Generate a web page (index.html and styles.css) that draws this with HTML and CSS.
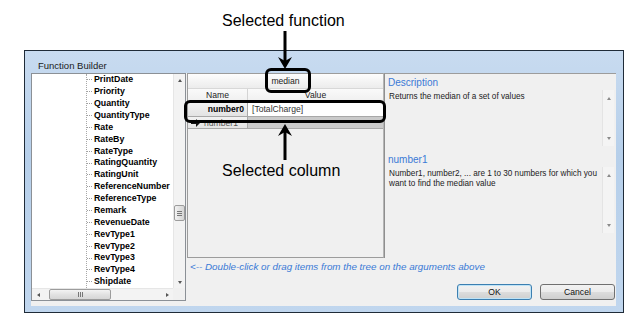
FILE: index.html
```html
<!DOCTYPE html>
<html lang="en">
<head>
    <meta charset="UTF-8">
    <title>Function Builder</title>
    <link rel="stylesheet" href="styles.css">
</head>
<body>
    <div class="stage">
        <div class="window">
            <div class="titlebar">Function Builder</div>
            <div class="client">
                <!-- field tree -->
                <div class="tree">
                    <ul class="tree-list">
                        <li>PrintDate</li>
                        <li>Priority</li>
                        <li>Quantity</li>
                        <li>QuantityType</li>
                        <li>Rate</li>
                        <li>RateBy</li>
                        <li>RateType</li>
                        <li>RatingQuantity</li>
                        <li>RatingUnit</li>
                        <li>ReferenceNumber</li>
                        <li>ReferenceType</li>
                        <li>Remark</li>
                        <li>RevenueDate</li>
                        <li>RevType1</li>
                        <li>RevType2</li>
                        <li>RevType3</li>
                        <li>RevType4</li>
                        <li>Shipdate</li>
                    </ul>
                    <div class="vscroll">
                        <div class="sb-btn"><i class="tri up"></i></div>
                        <div class="sb-track"><div class="thumb v"><b></b><b></b><b></b></div></div>
                        <div class="sb-btn"><i class="tri down"></i></div>
                    </div>
                    <div class="hscroll">
                        <div class="sb-btn"><i class="tri left"></i></div>
                        <div class="sb-track"><div class="thumb h"><b></b><b></b><b></b></div></div>
                        <div class="sb-btn"><i class="tri right"></i></div>
                    </div>
                    <div class="corner"></div>
                </div>

                <!-- arguments grid -->
                <div class="args">
                    <div class="fn-name">median</div>
                    <div class="arg-head">
                        <span class="c-name">Name</span>
                        <span class="c-value">Value</span>
                    </div>
                    <div class="arg-row">
                        <span class="c-name strong">number0</span>
                        <span class="c-value filled">[TotalCharge]</span>
                    </div>
                    <div class="arg-row">
                        <span class="c-name new">
                            <svg width="9" height="8" viewBox="0 0 9 8"><path d="M0 3h5V0l4 4-4 4V5H0z" fill="#111"/></svg>
                            number1
                        </span>
                        <span class="c-value empty"></span>
                    </div>
                </div>

                <!-- help text -->
                <div class="info">
                    <div class="info-title">Description</div>
                    <div class="info-box desc">
                        <p>Returns the median of a set of values</p>
                        <div class="mini-scroll"><i class="tri up"></i><i class="tri down"></i></div>
                    </div>
                    <div class="info-title">number1</div>
                    <div class="info-box arg">
                        <p>Number1, number2, ... are 1 to 30 numbers for which you want to find the median value</p>
                        <div class="mini-scroll"><i class="tri up"></i><i class="tri down"></i></div>
                    </div>
                </div>

                <div class="footer">
                    <div class="hint">&lt;-- Double-click or drag items from the tree on the arguments above</div>
                    <div class="buttons">
                        <button class="btn default">OK</button>
                        <button class="btn">Cancel</button>
                    </div>
                </div>
            </div>
        </div>

        <!-- annotations drawn over the screenshot -->
        <div class="callout callout-fn">Selected function</div>
        <svg class="arrow arrow-down" width="16" height="38" viewBox="0 0 16 38">
            <rect x="6.5" y="0" width="3" height="30" fill="#000"/>
            <path d="M8 38L1 26l7 4 7-4z" fill="#000"/>
        </svg>
        <div class="ring ring-fn"></div>
        <div class="ring ring-row"></div>
        <svg class="arrow arrow-up" width="16" height="36" viewBox="0 0 16 36">
            <path d="M8 0L1 12l7-4 7 4z" fill="#000"/>
            <rect x="6.5" y="8" width="3" height="28" fill="#000"/>
        </svg>
        <div class="callout callout-col">Selected column</div>
    </div>
</body>
</html>
```

FILE: styles.css
```css
* {
    margin: 0;
    padding: 0;
    box-sizing: border-box;
}
ul {
    list-style: none;
}
body {
    background: #fff;
    font-family: "Liberation Sans", Arial, sans-serif;
}
.stage {
    position: relative;
    width: 644px;
    height: 326px;
    overflow: hidden;
}

/* window frame */
.window {
    display: flex;
    flex-direction: column;
    width: 600px;
    height: 263px;
    margin: 50px 0 0 24px;
    padding: 0 7px 6px 6px;
    border: 1px solid #1f2b38;
    background: linear-gradient(#c8dbf0, #b6cfea 40%, #c0d6ee);
}
.titlebar {
    height: 23px;
    padding: 9px 0 0 7px;
    font-size: 9.5px;
    line-height: 12px;
    color: #1a1a1a;
}
.client {
    flex: 1;
    display: grid;
    grid-template-columns: 156px 197px 1fr;
    grid-template-rows: 185px 1fr;
    background: #f0f0f0;
}

/* tree */
.tree {
    grid-row: 1 / 3;
    width: 155px;
    margin-bottom: 5px;
    display: grid;
    grid-template-columns: 1fr 12px;
    grid-template-rows: 1fr 12px;
    border: 1px solid #8b9096;
    background: #fff;
    overflow: hidden;
}
.tree-list {
    margin-left: 54px;
    border-left: 1px dotted #a8a8a8;
    font-size: 8.8px;
    font-weight: bold;
    line-height: 11.88px;
    color: #000;
    white-space: nowrap;
    overflow: hidden;
}
.tree-list li::before {
    content: "";
    display: inline-block;
    width: 5px;
    margin-right: 2px;
    vertical-align: middle;
    border-top: 1px dotted #a0a0a0;
}
.vscroll,
.hscroll {
    display: flex;
    background: #f3f3f3;
}
.vscroll {
    flex-direction: column;
    border-left: 1px solid #e6e6e6;
}
.hscroll {
    border-top: 1px solid #e6e6e6;
}
.sb-btn {
    flex: 0 0 12px;
    display: flex;
    align-items: center;
    justify-content: center;
}
.sb-track {
    flex: 1;
    display: flex;
}
.vscroll .sb-track {
    flex-direction: column;
}
.thumb {
    display: flex;
    align-items: center;
    justify-content: center;
    gap: 1px;
    border: 1px solid #9c9c9c;
    border-radius: 2px;
}
.thumb.v {
    flex-direction: column;
    height: 16px;
    margin: 119px 0 0 0;
    background: linear-gradient(90deg, #f3f3f3, #e2e2e2 50%, #d6d6d6);
}
.thumb.v b {
    width: 5px;
    height: 1px;
    background: #777;
}
.thumb.h {
    width: 62px;
    margin-left: 5px;
    background: linear-gradient(#f3f3f3, #e2e2e2 50%, #d6d6d6);
}
.thumb.h b {
    width: 1px;
    height: 5px;
    background: #777;
}
.corner {
    background: #f0f0f0;
}
.tri {
    display: block;
    width: 0;
    height: 0;
    border: 2.5px solid transparent;
}
.tri.up {
    border-bottom: 3px solid #555;
    border-top-width: 0;
}
.tri.down {
    border-top: 3px solid #555;
    border-bottom-width: 0;
}
.tri.left {
    border-right: 3px solid #555;
    border-left-width: 0;
}
.tri.right {
    border-left: 3px solid #555;
    border-right-width: 0;
}

/* arguments */
.args {
    display: flex;
    flex-direction: column;
    border: 1px solid #9c9c9c;
    border-right-color: #b5b5b5;
    font-size: 8.6px;
    color: #222;
}
.fn-name {
    height: 15px;
    line-height: 14px;
    text-align: center;
    background: linear-gradient(#fdfdfd, #ececec);
    border-bottom: 1px solid #d8d8d8;
}
.arg-head,
.arg-row {
    display: flex;
}
.arg-head {
    height: 13px;
    line-height: 13px;
    background: linear-gradient(#fafafa, #efefef);
}
.arg-head .c-name {
    text-align: center;
    border-right: 1px solid #d4d4d4;
}
.arg-head .c-value {
    text-align: center;
}
.c-name {
    width: 60px;
}
.c-value {
    flex: 1;
}
.arg-row {
    border-top: 1px solid #a8a8a8;
}
.arg-row .c-name {
    background: linear-gradient(#f2f2f2, #e3e3e3);
    border-right: 1px solid #a8a8a8;
}
.strong {
    height: 13px;
    line-height: 13px;
    padding-right: 3px;
    text-align: right;
    font-weight: bold;
    color: #000;
}
.filled {
    height: 13px;
    line-height: 13px;
    padding-left: 4px;
    background: #fff;
    color: #333;
}
.new {
    display: flex;
    align-items: center;
    gap: 4px;
    height: 11px;
    padding-left: 3px;
    color: #555;
}
.empty {
    height: 11px;
    background: #cacaca;
}
.arg-row:last-child {
    border-bottom: 1px solid #a8a8a8;
}

/* description */
.info {
    display: flex;
    flex-direction: column;
    padding: 1px 2px 0 3px;
    border-top: 1px solid #9c9c9c;
    border-left: 1px solid #8f8f8f;
    font-size: 8.2px;
    color: #222;
}
.info-title {
    height: 15px;
    line-height: 15px;
    font-size: 10px;
    color: #3a7ad6;
}
.info-box {
    display: flex;
}
.info-box p {
    flex: 1;
    min-width: 0;
    padding: 2px 0 0 1px;
    line-height: 10px;
}
.info-box.desc {
    height: 56px;
    margin-bottom: 6px;
}
.info-box.arg {
    flex: 1;
    align-items: flex-start;
}
.info-box.arg .mini-scroll {
    height: 66px;
}
.mini-scroll {
    flex: 0 0 12px;
    height: 56px;
    display: flex;
    flex-direction: column;
    align-items: center;
    justify-content: space-between;
    padding: 7px 0 6px;
    background: #f4f4f4;
    border-left: 1px solid #e4e4e4;
}
.mini-scroll .tri.up,
.mini-scroll .tri.down {
    border-bottom-color: #8a8a8a;
    border-top-color: #8a8a8a;
}

/* footer */
.footer {
    grid-column: 2 / 4;
    display: flex;
    flex-direction: column;
}
.hint {
    height: 17px;
    padding: 1px 0 0 3px;
    line-height: 16px;
    font-size: 9.8px;
    font-style: italic;
    color: #3a7ad6;
}
.buttons {
    display: flex;
    justify-content: flex-end;
    gap: 8px;
    margin-top: 9px;
    padding-right: 1px;
}
.btn {
    width: 75px;
    height: 16px;
    border: 1px solid #707070;
    border-radius: 3px;
    background: linear-gradient(#f2f2f2, #ebebeb 50%, #dddddd 50%, #cfcfcf);
    font-family: "Liberation Sans", Arial, sans-serif;
    font-size: 8.6px;
    color: #111;
}
.btn.default {
    border-color: #3c7fb1;
    box-shadow: inset 0 0 0 1px #bfe3f6;
}

/* annotations */
.callout {
    position: absolute;
    font-size: 16px;
    line-height: 20px;
    color: #000;
    white-space: nowrap;
}
.callout-fn {
    left: 222px;
    top: 11px;
}
.callout-col {
    left: 222px;
    top: 161px;
}
.arrow {
    position: absolute;
    left: 277px;
}
.arrow-down {
    top: 31px;
}
.arrow-up {
    top: 124px;
}
.ring {
    position: absolute;
    border: 3px solid #000;
    border-radius: 6px;
}
.ring-fn {
    left: 265px;
    top: 68px;
    width: 46px;
    height: 25px;
}
.ring-row {
    left: 184px;
    top: 100px;
    width: 202px;
    height: 23px;
}
```
